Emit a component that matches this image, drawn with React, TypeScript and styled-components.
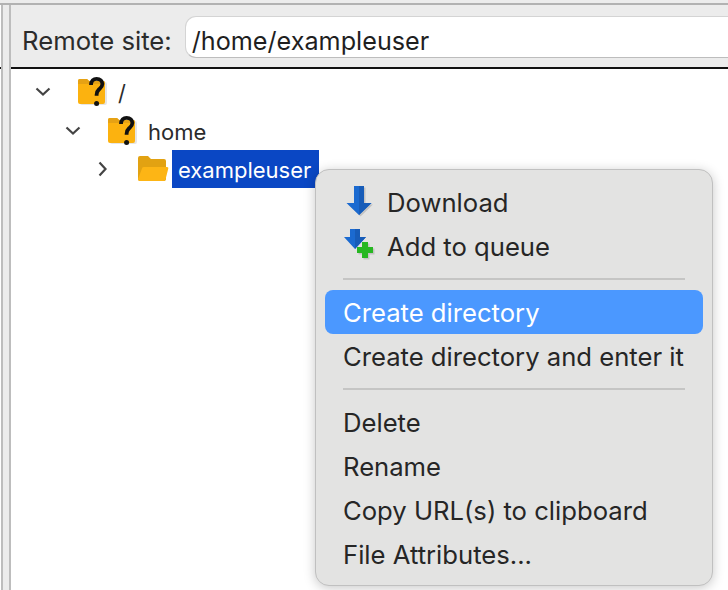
import React from 'react';
import styled, { createGlobalStyle } from 'styled-components';

const GlobalStyle = createGlobalStyle`
  html, body {
    margin: 0;
    padding: 0;
    background: #ffffff;
  }
  body {
    font-family: Inter, "Liberation Sans", sans-serif;
    -webkit-font-smoothing: antialiased;
  }
`;

function UnknownFolderIcon() {
  return (
    <svg width="32" height="36" viewBox="0 0 32 36">
      <path d="M2 7a2 2 0 0 1 2-2h7l2 2h14a2 2 0 0 1 2 2v19a2 2 0 0 1-2 2H4a2 2 0 0 1-2-2z" fill="#000" opacity="0.1" transform="translate(1 1)" />
      <path d="M1 7a2 2 0 0 1 2-2h7l2 2h14a2 2 0 0 1 2 2v19a2 2 0 0 1-2 2H3a2 2 0 0 1-2-2z" fill="#fcb20f" />
      <path d="M1 7a2 2 0 0 1 2-2h7l2 2h14a2 2 0 0 1 2 2v1H1z" fill="#e6a214" />
      <path
        d="M14 11c0-4 2.600-6.200 5.600-6.200 3.600 0 5.800 2.300 5.800 5.300 0 2.800-1.900 4-3.500 5.400-1.500 1.300-2.300 2.400-2.300 5.200v1"
        fill="none"
        stroke="#111"
        strokeWidth="3.800"
      />
      <circle cx="19.600" cy="29.600" r="2.500" fill="#111" />
    </svg>
  );
}

function FolderIcon() {
  return (
    <svg width="32" height="28" viewBox="0 0 32 28">
      <path d="M1 3a2 2 0 0 1 2-2h8l3 3h13a2 2 0 0 1 2 2v18a2 2 0 0 1-2 2H3a2 2 0 0 1-2-2z" fill="#e2a212" />
      <path d="M5 13.500a1.500 1.500 0 0 1 1.500-1.500H30a1.300 1.300 0 0 1 1.300 1.600L28.500 24.500A2 2 0 0 1 26.600 26H3a2 2 0 0 1-2-2z" fill="#fdb515" />
    </svg>
  );
}

function Chevron({ open }: { open: boolean }) {
  return (
    <svg width="16" height="16" viewBox="0 0 16 16">
      <path
        d={open ? 'M1.500 4.500 8 10.500l6.500-6' : 'M4.500 1.500 10.500 8l-6 6.500'}
        fill="none"
        stroke="#444"
        strokeWidth="2.200"
      />
    </svg>
  );
}

function DownloadIcon() {
  return (
    <svg width="32" height="32" viewBox="-1 0 32 32">
      <path d="M10 0h10v17h7.500L15 29 2.500 17H10z" fill="#000" opacity="0.14" transform="translate(1.500 1.500)" />
      <path d="M10 0h10v17h7.500L15 29 2.500 17H10z" fill="#1b6ad0" />
      <path d="M15 0h5v17h7.500L15 29z" fill="#175cb8" />
    </svg>
  );
}

function QueueIcon() {
  return (
    <svg width="32" height="34" viewBox="-1 0 32 34">
      <path d="M6 0h10v8h6L11 20 0 8h6z" fill="#1b6ad0" />
      <path d="M11 0h5v8h6L11 20z" fill="#175cb8" />
      <path d="M18 13h6v5h5v6h-5v5h-6v-5h-5v-6h5z" fill="#000" opacity="0.14" transform="translate(1.500 1.500)" />
      <path d="M18 13h6v5h5v6h-5v5h-6v-5h-5v-6h5z" fill="#27b722" />
    </svg>
  );
}

const Window = styled.div`
  position: relative;
  display: flex;
  flex-direction: column;
  width: 728px;
  height: 590px;
  overflow: hidden;
  background: #ffffff;
`;

const TopEdge = styled.div`
  flex: none;
  height: 3px;
  background: #ececec;
  border-bottom: 2px solid #b2b2b2;
`;

const Body = styled.div`
  flex: 1;
  display: flex;
  min-height: 0;
`;

const EdgeTick = styled.div`
  flex: none;
  align-self: flex-start;
  width: 1px;
  height: 2px;
  margin-top: 62px;
  background: #111111;
`;

const LeftStrip = styled.div`
  flex: none;
  width: 10px;
  box-sizing: border-box;
  background: #ececec;
  border-left: 2px solid #bdbdbd;
  border-right: 2px solid #bdbdbd;
`;

const Pane = styled.div`
  flex: 1;
  display: flex;
  flex-direction: column;
  min-width: 0;
`;

const Toolbar = styled.div`
  flex: none;
  display: flex;
  align-items: center;
  gap: 13px;
  box-sizing: border-box;
  height: 64px;
  padding-left: 11px;
  background: #ececec;
  border-bottom: 2px solid #111111;
`;

const FieldLabel = styled.label`
  padding-top: 8px;
  font-size: 25.700px;
  color: #2b2b2b;
  white-space: nowrap;
`;

const AddressInput = styled.div`
  flex: 1;
  display: flex;
  align-items: center;
  box-sizing: border-box;
  height: 42px;
  margin-top: 1px;
  padding: 8px 0 0 6px;
  background: #ffffff;
  border: 1px solid #d4d4d4;
  border-bottom-color: #bdbdbd;
  border-right: none;
  border-radius: 11px 0 0 11px;
  font-size: 25.200px;
  color: #1f1f1f;
`;

const Tree = styled.div`
  flex: 1;
  padding: 4px 0 0 24px;
`;

const TreeRow = styled.div<{ $depth: number }>`
  display: flex;
  align-items: center;
  height: 38.500px;
  padding-left: ${(p) => p.$depth * 30}px;
`;

const ChevronSlot = styled.span`
  flex: none;
  display: flex;
  width: 42px;
`;

const IconSlot = styled.span`
  flex: none;
  display: flex;
  align-items: center;
  width: 35px;
`;

const TreeLabel = styled.span<{ $selected?: boolean }>`
  font-size: 22px;
  line-height: 36px;
  padding: 2px 8px 0 6px;
  color: ${(p) => (p.$selected ? '#ffffff' : '#2b2b2b')};
  background: ${(p) => (p.$selected ? '#0a47c4' : 'transparent')};
`;

const Menu = styled.div`
  position: absolute;
  left: 315px;
  top: 169px;
  width: 398px;
  height: 417px;
  box-sizing: border-box;
  padding: 10px 9px;
  background: #e3e3e2;
  border: 1px solid #c0c0c0;
  border-radius: 14px;
  box-shadow: 0 2px 12px rgba(0, 0, 0, 0.22);
`;

const MenuItem = styled.div<{ $active?: boolean }>`
  display: flex;
  align-items: center;
  height: 44px;
  padding: 0 18px;
  border-radius: 8px;
  font-size: 25.650px;
  white-space: nowrap;
  color: ${(p) => (p.$active ? '#ffffff' : '#262626')};
  background: ${(p) => (p.$active ? '#4b98ff' : 'transparent')};
`;

const MenuIcon = styled.span`
  flex: none;
  display: flex;
  width: 44px;
`;

const Separator = styled.div`
  height: 2px;
  margin: 10px 18px;
  background: #c5c5c4;
`;

export default function App() {
  return (
    <Window>
      <GlobalStyle />
      <TopEdge />
      <Body>
        <EdgeTick />
        <LeftStrip />
        <Pane>
          <Toolbar>
            <FieldLabel>Remote site:</FieldLabel>
            <AddressInput>/home/exampleuser</AddressInput>
          </Toolbar>
          <Tree>
            <TreeRow $depth={0}>
              <ChevronSlot><Chevron open /></ChevronSlot>
              <IconSlot><UnknownFolderIcon /></IconSlot>
              <TreeLabel>/</TreeLabel>
            </TreeRow>
            <TreeRow $depth={1}>
              <ChevronSlot><Chevron open /></ChevronSlot>
              <IconSlot><UnknownFolderIcon /></IconSlot>
              <TreeLabel>home</TreeLabel>
            </TreeRow>
            <TreeRow $depth={2}>
              <ChevronSlot><Chevron open={false} /></ChevronSlot>
              <IconSlot><FolderIcon /></IconSlot>
              <TreeLabel $selected>exampleuser</TreeLabel>
            </TreeRow>
          </Tree>
        </Pane>
      </Body>
      <Menu>
        <MenuItem>
          <MenuIcon><DownloadIcon /></MenuIcon>
          Download
        </MenuItem>
        <MenuItem>
          <MenuIcon><QueueIcon /></MenuIcon>
          Add to queue
        </MenuItem>
        <Separator />
        <MenuItem $active>Create directory</MenuItem>
        <MenuItem>Create directory and enter it</MenuItem>
        <Separator />
        <MenuItem>Delete</MenuItem>
        <MenuItem>Rename</MenuItem>
        <MenuItem>Copy URL(s) to clipboard</MenuItem>
        <MenuItem>File Attributes...</MenuItem>
      </Menu>
    </Window>
  );
}
